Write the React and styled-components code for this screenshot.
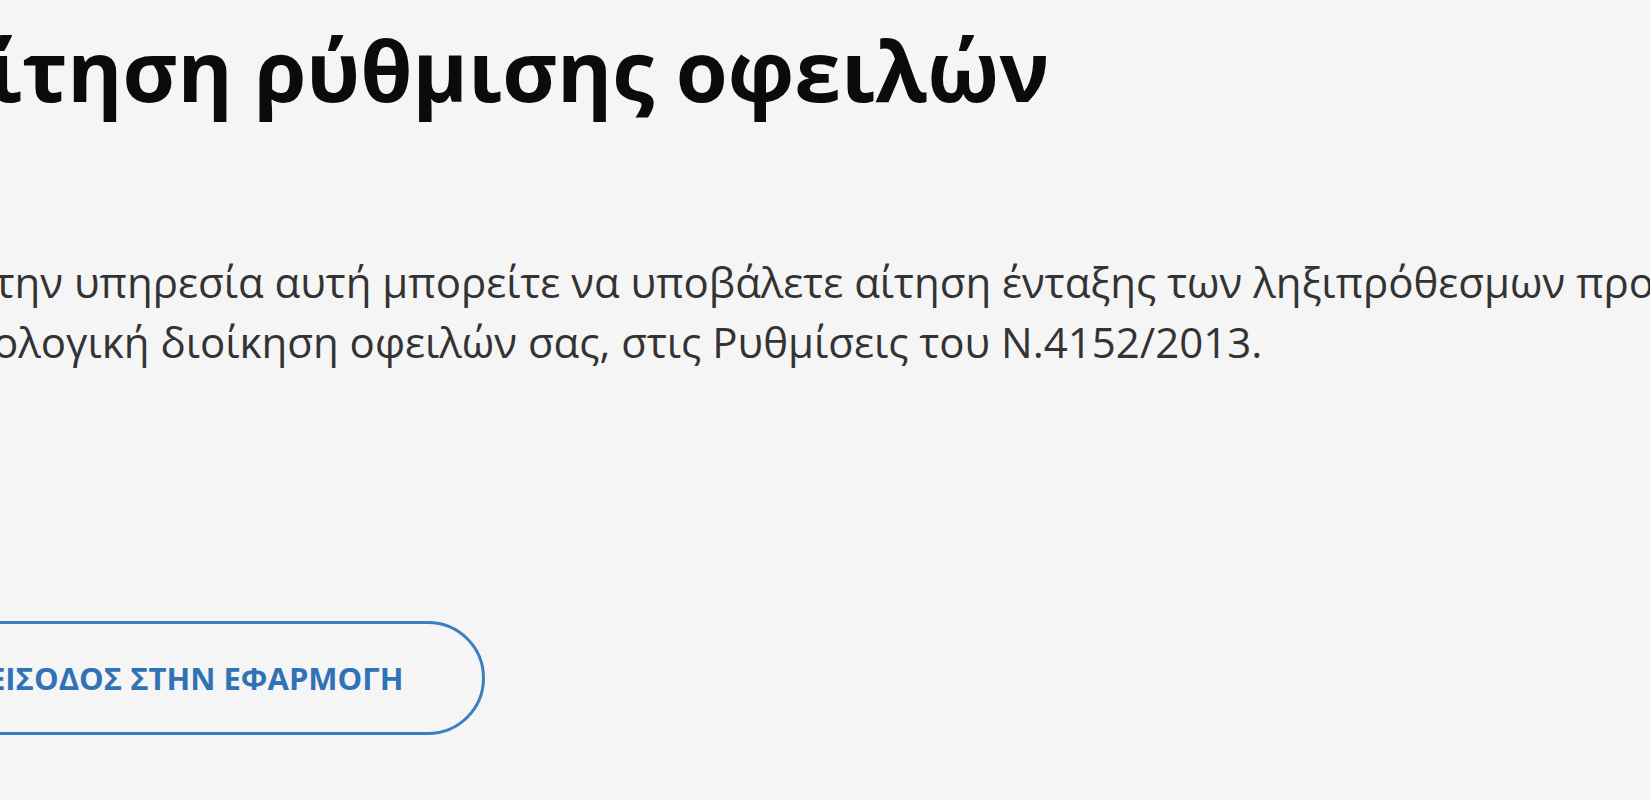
import React from "react";
import styled, { createGlobalStyle } from "styled-components";

const GlobalStyle = createGlobalStyle`
  html, body {
    margin: 0;
    padding: 0;
    background: #f5f5f5;
    overflow: hidden;
  }
  body {
    font-family: "Open Sans", "Noto Sans", sans-serif;
    width: 1650px;
    height: 800px;
  }
`;

const Page = styled.main`
  width: 1650px;
  height: 800px;
  overflow: hidden;
  background: #f5f5f5;
`;

const Content = styled.section`
  display: flex;
  flex-direction: column;
  align-items: flex-start;
  margin-left: -81px;
  padding-top: 17px;
  width: 1900px;
`;

const Title = styled.h1`
  margin: 0 0 0 11px;
  font-family: "Open Sans", sans-serif;
  font-weight: 700;
  font-size: 84px;
  line-height: 106px;
  color: #0b0b0b;
  white-space: nowrap;
`;

const Lead = styled.p`
  margin: 129px 0 0 -10px;
  max-width: 1900px;
  text-indent: 17px;
  font-family: "Open Sans", sans-serif;
  font-weight: 400;
  font-size: 42px;
  line-height: 60px;
  color: #333333;
`;

const EntryButton = styled.a`
  display: inline-flex;
  align-items: center;
  justify-content: center;
  box-sizing: border-box;
  margin-top: 249px;
  height: 114px;
  padding: 0 79px 0 66px;
  border: 3.5px solid #3a7fc2;
  border-radius: 57px;
  font-family: "Open Sans", sans-serif;
  font-weight: 700;
  font-size: 31px;
  color: #2f72b6;
  text-transform: uppercase;
  text-decoration: none;
  cursor: pointer;
`;

export default function App() {
  return (
    <>
      <GlobalStyle />
      <Page>
        <Content>
          <Title>Αίτηση ρύθμισης οφειλών</Title>
          <Lead>
            Με την υπηρεσία αυτή μπορείτε να υποβάλετε αίτηση ένταξης των
            ληξιπρόθεσμων προς τη Φορολογική διοίκηση οφειλών σας, στις
            Ρυθμίσεις του Ν.4152/2013.
          </Lead>
          <EntryButton href="#">Εισοδος στην εφαρμογη</EntryButton>
        </Content>
      </Page>
    </>
  );
}
